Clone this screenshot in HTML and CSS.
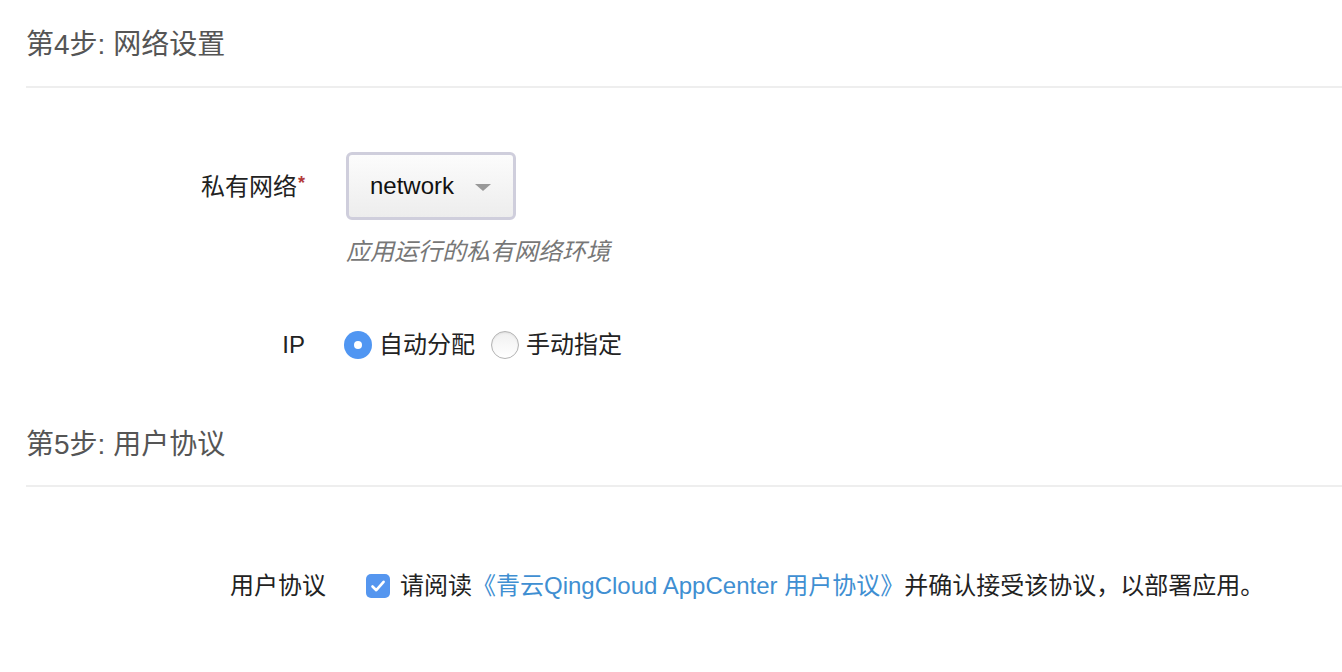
FILE: index.html
```html
<!DOCTYPE html>
<html lang="zh-CN">
<head>
<meta charset="utf-8">
<title>网络设置</title>
<link rel="stylesheet" href="styles.css">
</head>
<body>
<div class="page">
  <h2 class="step-title">第4步: 网络设置</h2>
  <div class="step-body step-network">
    <div class="form-row">
      <div class="label label-tall">私有网络<span class="req">*</span></div>
      <div class="control">
        <div class="select">
          <span class="select-value">network</span>
          <span class="caret"></span>
        </div>
        <div class="hint">应用运行的私有网络环境</div>
      </div>
    </div>
    <div class="form-row row-ip">
      <div class="label">IP</div>
      <div class="control radios">
        <span class="radio checked"></span><span class="radio-text">自动分配</span>
        <span class="radio"></span><span class="radio-text">手动指定</span>
      </div>
    </div>
  </div>

  <h2 class="step-title step-title-2">第5步: 用户协议</h2>
  <div class="step-body step-agree">
    <div class="form-row">
      <div class="label label-wide">用户协议</div>
      <div class="control agree">
        <span class="checkbox">
          <svg width="24" height="24" viewBox="0 0 24 24"><path d="M6.5 12.5 L10.3 16.2 L17.6 7.8" fill="none" stroke="#fff" stroke-width="2.6" stroke-linecap="round" stroke-linejoin="round"/></svg>
        </span>
        <span class="agree-text">请阅读<a class="link" href="#">《青云QingCloud AppCenter 用户协议》</a>并确认接受该协议，以部署应用。</span>
      </div>
    </div>
  </div>
</div>
</body>
</html>
```

FILE: styles.css
```css
html, body {
  margin: 0;
  padding: 0;
  background: #ffffff;
}

body {
  font-family: "Liberation Sans", "Noto Sans CJK SC", sans-serif;
  font-size: 24px;
  color: #222222;
}

.page {
  padding-left: 26px;
}

.step-title {
  margin: 0;
  padding: 25px 0 21px;
  font-size: 28px;
  line-height: 40px;
  font-weight: normal;
  color: #555555;
  border-bottom: 2px solid #eeeeee;
}

.step-title-2 {
  padding-top: 63px;
  padding-bottom: 20px;
}

.step-network {
  padding-top: 64px;
}

.step-agree {
  padding-top: 82px;
}

.form-row {
  display: flex;
  align-items: flex-start;
}

.label {
  width: 279px;
  text-align: right;
  line-height: 34px;
  color: #222222;
  flex: none;
}

.label-tall {
  line-height: 62px;
}

.label-wide {
  width: 300px;
}

.req {
  color: #b33a3a;
  font-size: 18px;
  font-weight: bold;
  vertical-align: 6px;
  margin-left: 1px;
}

.control {
  margin-left: 41px;
}

.select {
  box-sizing: border-box;
  width: 170px;
  height: 68px;
  border: 3px solid #cfcedc;
  border-radius: 6px;
  background: linear-gradient(#fcfcfc, #ededed);
  display: flex;
  align-items: center;
  padding-left: 21px;
}

.select-value {
  color: #111111;
  font-size: 24px;
}

.caret {
  margin-left: 21px;
  width: 0;
  height: 0;
  border-left: 8px solid transparent;
  border-right: 8px solid transparent;
  border-top: 7px solid #999999;
  margin-top: 2px;
}

.hint {
  margin-top: 15px;
  line-height: 34px;
  font-style: italic;
  color: #777777;
}

.row-ip {
  margin-top: 59px;
}

.radios {
  display: flex;
  align-items: center;
  margin-left: 39px;
  height: 34px;
}

.radio {
  box-sizing: border-box;
  width: 28px;
  height: 28px;
  border-radius: 50%;
  border: 1px solid #b3b3b3;
  background: linear-gradient(#f0f0f0, #ffffff);
  box-shadow: inset 0 1px 2px rgba(0, 0, 0, 0.08);
  position: relative;
  flex: none;
}

.radio.checked {
  border: none;
  background: #5096f2;
  box-shadow: none;
}

.radio.checked::after {
  content: "";
  position: absolute;
  left: 10px;
  top: 10px;
  width: 8px;
  height: 8px;
  border-radius: 50%;
  background: #ffffff;
}

.radio-text {
  margin-left: 7px;
  margin-right: 16px;
  line-height: 34px;
}

.agree {
  display: flex;
  align-items: center;
  height: 34px;
  margin-left: 40px;
}

.checkbox {
  width: 24px;
  height: 24px;
  border-radius: 5px;
  background: #5596ef;
  display: flex;
  flex: none;
}

.agree-text {
  margin-left: 10px;
  line-height: 34px;
  white-space: nowrap;
}

.link {
  color: #3f8fd2;
  text-decoration: none;
}
```
